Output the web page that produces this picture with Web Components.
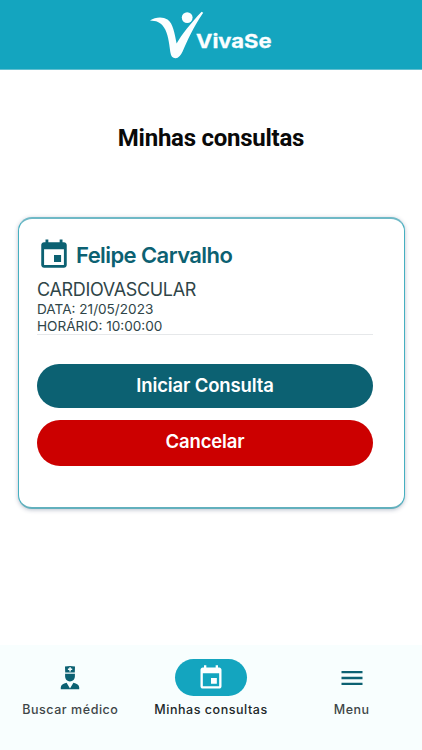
<!DOCTYPE html>
<html lang="pt-BR">
<head>
<meta charset="UTF-8">
<meta name="viewport" content="width=device-width, initial-scale=1">
<title>VivaSe</title>
<style>
    html, body {
        margin: 0;
        height: 100%;
    }
    body {
        --teal: #14a5bf;
        --petrol: #0c6172;
        background: #fff;
        font-family: Inter, "Liberation Sans", sans-serif;
        overflow: hidden;
    }
</style>
</head>
<body>
<vivase-app></vivase-app>
<script>
const ICONS = {
    event: '<path d="M17 12h-5v5h5v-5zM16 1v2H8V1H6v2H5c-1.11 0-1.99.9-1.99 2L3 19c0 1.1.89 2 2 2h14c1.1 0 2-.9 2-2V5c0-1.1-.9-2-2-2h-1V1h-2zm3 18H5V8h14v11z"/>',
    menu: '<path d="M3 18h18v-2H3v2zm0-5h18v-2H3v2zm0-7v2h18V6H3z"/>',
    doctor: '<path fill-rule="evenodd" d="M7.700 2.200Q12 1.200 16.300 2.200L16.100 7.300H7.900zM11.400 2.700v1.200h-1.200v1.300h1.200v1.200h1.300V5.200h1.200V3.900h-1.200V2.700z"/><path d="M7.800 8.300h8.400v2.300c0 2.500-1.800 4.400-4.200 4.400s-4.200-1.900-4.200-4.400zM9.100 16.100l2.900 4.900 2.900-4.900c3 .7 5 1.900 5 4v1.600H4.100v-1.600c0-2.100 2-3.300 5-4z"/>'
};

class AppIcon extends HTMLElement {
    constructor() {
        super();
        this.attachShadow({ mode: 'open' });
    }

    connectedCallback() {
        const name = this.getAttribute('name');
        this.shadowRoot.innerHTML = `
            <style>
                :host {
                    display: block;
                    flex: none;
                    width: 28px;
                    height: 28px;
                }
                svg {
                    display: block;
                    width: 100%;
                    height: 100%;
                    fill: currentColor;
                }
            </style>
            <svg viewBox="0 0 24 24" aria-hidden="true">${ICONS[name] || ''}</svg>
        `;
    }
}

class AppHeader extends HTMLElement {
    constructor() {
        super();
        this.attachShadow({ mode: 'open' });
        this.shadowRoot.innerHTML = `
            <style>
                :host {
                    display: flex;
                    justify-content: center;
                    flex: none;
                    height: 69px;
                    background: var(--teal);
                    border-bottom: 1px solid #62bfd0;
                }
                svg {
                    display: block;
                    fill: #fbfeff;
                }
                text {
                    font: 700 19px Inter, sans-serif;
                    stroke: #fbfeff;
                    stroke-width: .3px;
                }
            </style>
            <svg width="124" height="69" viewBox="149 0 124 69" role="img" aria-label="VivaSe">
                <path d="M150 20.600C155 17 162.500 16.200 167.500 19.500C173 23.200 174.500 33 176.600 43.500C181.500 35 190.500 23.500 201.600 11.800L203.200 12.800C193.500 27 187.500 40.500 182.600 51.500Q179.600 58 175.800 58.200Q171.200 58.500 170.300 52C169 42 168 33.500 164 27.500C160.500 22 156 20.900 150 20.600z"/>
                <circle cx="187.200" cy="17.600" r="5.400"/>
                <text x="196" y="48" textLength="75.500" lengthAdjust="spacingAndGlyphs">VivaSe</text>
            </svg>
        `;
    }
}

class PillButton extends HTMLElement {
    constructor() {
        super();
        this.attachShadow({ mode: 'open' });
        this.shadowRoot.innerHTML = `
            <style>
                :host {
                    display: block;
                    height: 44px;
                }
                :host([variant="danger"]) {
                    --pill-bg: #cc0000;
                    --pill-pad: 4px;
                    height: 46px;
                }
                button {
                    display: block;
                    width: 100%;
                    height: 100%;
                    padding: 0 0 var(--pill-pad, 2px);
                    border: 0;
                    border-radius: 23px;
                    background: var(--pill-bg, var(--petrol));
                    color: #fff;
                    font: 600 18.500px Inter, sans-serif;
                    letter-spacing: -.13px;
                    cursor: pointer;
                }
            </style>
            <button type="button"><slot></slot></button>
        `;
    }
}

class ConsultaCard extends HTMLElement {
    constructor() {
        super();
        this.attachShadow({ mode: 'open' });
        this.shadowRoot.innerHTML = `
            <style>
                :host {
                    display: block;
                    box-sizing: border-box;
                    margin: 0 17.500px 0 17.500px;
                    height: 292px;
                    padding: 18px 30.500px 0 18.500px;
                    border: solid #45afc0;
                    border-width: 2px 1px;
                    border-top-color: #6fb9c6;
                    border-bottom-color: #62b0bd;
                    border-radius: 14px;
                    background: #fff;
                    box-shadow: 0 1px 4px rgba(30, 50, 90, .3);
                    color: #2f4548;
                }
                .doctor {
                    display: flex;
                    align-items: flex-start;
                    gap: 5px;
                    height: 34px;
                    color: var(--petrol);
                }
                app-icon {
                    width: 34px;
                    height: 34px;
                    margin-top: 1px;
                }
                h2 {
                    margin: 4px 0 0;
                    font-size: 22px;
                    font-weight: 600;
                    line-height: 28px;
                    letter-spacing: -.58px;
                    white-space: nowrap;
                }
                .info {
                    padding-top: 7px;
                    border-bottom: 1px solid #e6e8ea;
                    font-size: 13.600px;
                    line-height: 17px;
                }
                .area {
                    font-size: 18px;
                    line-height: 23px;
                    letter-spacing: -.33px;
                }
                .time {
                    height: 16px;
                }
                .actions {
                    display: grid;
                    gap: 12px;
                    margin-top: 29px;
                }
            </style>
            <div class="doctor">
                <app-icon name="event"></app-icon>
                <h2><slot name="doctor"></slot></h2>
            </div>
            <div class="info">
                <div class="area"><slot name="area"></slot></div>
                <div class="date"><slot name="date"></slot></div>
                <div class="time"><slot name="time"></slot></div>
            </div>
            <div class="actions"><slot></slot></div>
        `;
    }
}

class NavItem extends HTMLElement {
    constructor() {
        super();
        this.attachShadow({ mode: 'open' });
    }

    connectedCallback() {
        this.shadowRoot.innerHTML = `
            <style>
                :host {
                    display: flex;
                    flex: 1;
                    flex-direction: column;
                    align-items: center;
                    color: #3e4648;
                    cursor: pointer;
                }
                .indicator {
                    display: flex;
                    align-items: center;
                    justify-content: center;
                    width: 72px;
                    height: 37px;
                    border-radius: 19px;
                    color: var(--petrol);
                }
                :host([active]) {
                    color: #202729;
                }
                :host([active]) .indicator {
                    background: var(--teal);
                    color: #fff;
                }
                .label {
                    margin-top: 4px;
                    font-size: 12.500px;
                    font-weight: 500;
                    line-height: 19px;
                    letter-spacing: .55px;
                    white-space: nowrap;
                }
            </style>
            <div class="indicator"><app-icon name="${this.getAttribute('icon')}"></app-icon></div>
            <div class="label"><slot></slot></div>
        `;
    }
}

class BottomNav extends HTMLElement {
    constructor() {
        super();
        this.attachShadow({ mode: 'open' });
        this.shadowRoot.innerHTML = `
            <style>
                :host {
                    display: flex;
                    flex: none;
                    box-sizing: border-box;
                    height: 105px;
                    padding-top: 14px;
                    background: #f8fefe;
                }
            </style>
            <slot></slot>
        `;
    }
}

class VivaseApp extends HTMLElement {
    constructor() {
        super();
        this.attachShadow({ mode: 'open' });
        this.shadowRoot.innerHTML = `
            <style>
                :host {
                    display: flex;
                    flex-direction: column;
                    height: 100vh;
                }
                main {
                    flex: 1;
                }
                h1 {
                    margin: 52px 0 63px;
                    color: #090909;
                    font: 700 24px/32px Roboto, sans-serif;
                    letter-spacing: -.25px;
                    text-align: center;
                }
            </style>
            <app-header></app-header>
            <main>
                <h1>Minhas consultas</h1>
                <consulta-card>
                    <span slot="doctor">Felipe Carvalho</span>
                    <span slot="area">CARDIOVASCULAR</span>
                    <span slot="date">DATA: 21/05/2023</span>
                    <span slot="time">HORÁRIO: 10:00:00</span>
                    <pill-button>Iniciar Consulta</pill-button>
                    <pill-button variant="danger">Cancelar</pill-button>
                </consulta-card>
            </main>
            <bottom-nav>
                <nav-item icon="doctor">Buscar médico</nav-item>
                <nav-item icon="event" active>Minhas consultas</nav-item>
                <nav-item icon="menu">Menu</nav-item>
            </bottom-nav>
        `;
    }
}

customElements.define('app-icon', AppIcon);
customElements.define('app-header', AppHeader);
customElements.define('pill-button', PillButton);
customElements.define('consulta-card', ConsultaCard);
customElements.define('nav-item', NavItem);
customElements.define('bottom-nav', BottomNav);
customElements.define('vivase-app', VivaseApp);
</script>
</body>
</html>
